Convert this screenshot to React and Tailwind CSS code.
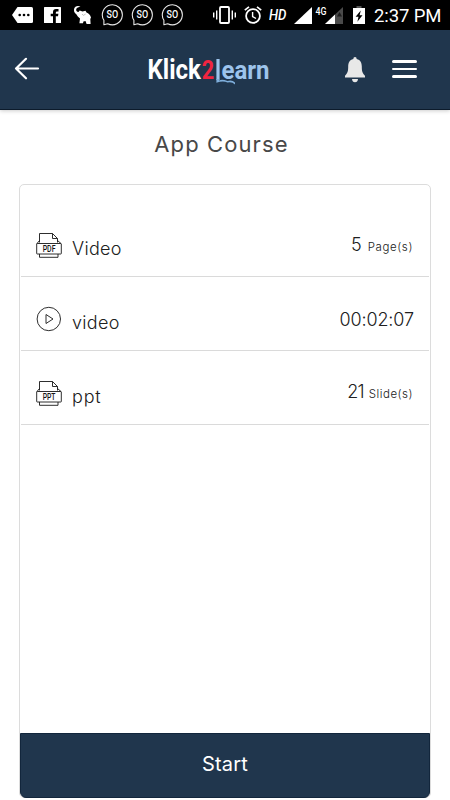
const ink = "#161616";

function ChatBadge() {
  return (
    <svg className="h-[22px] w-[22px] shrink-0" viewBox="0 0 22 22" fill="none">
      <path d="M2.9 20.8 V16.2 A10 10 0 1 1 6.7 19.7 Z" stroke="#e8e8e8" strokeWidth="1.1" strokeLinejoin="round" />
      <text x="5.6" y="14.4" textLength="11.6" lengthAdjust="spacingAndGlyphs" fontFamily="Roboto, sans-serif" fontWeight="500" fontSize="10" fill="#fff">SO</text>
    </svg>
  );
}

function StatusBar() {
  return (
    <div className="flex h-[30px] shrink-0 items-center bg-black">
      <svg className="ml-3 h-4 w-[21px] shrink-0" viewBox="0 0 21 16">
        <path d="M5.5 0 H19.5 Q21 0 21 1.5 V14.5 Q21 16 19.5 16 H5.5 L0 8 Z" fill="#fff" />
        <g fill="#000"><circle cx="7.7" cy="8" r="1.3" /><circle cx="12" cy="8" r="1.3" /><circle cx="16.3" cy="8" r="1.3" /></g>
      </svg>
      <svg className="ml-[11px] h-4 w-[17px] shrink-0" viewBox="0 0 17 16">
        <rect width="17" height="16" rx="0.5" fill="#fff" />
        <path d="M9 16 V9.3 H6.7 V6.7 H9 V5 Q9 2 12 2 H14.5 V4.6 H13 Q11.8 4.6 11.8 5.7 V6.7 H14.4 L14 9.3 H11.8 V16 Z" fill="#000" />
      </svg>
      <svg className="ml-3 h-5 w-[19px] shrink-0" viewBox="0 0 19 20">
        <path d="M7.5 1.8 C5.5 .2 2.5 .8 1.4 3 C.4 5.3 1.1 7.7 3.3 9.2 L4.8 11.5 L7 13.5 L6.4 18.3 H10 L10.4 16.5 L12.500 16 L13.6 18.9 H17.6 L17.3 14 L18 12.5 C17 9.5 15.7 8.2 13.5 7.5 L12.5 5.8 L9.5 6.6 L6.7 5.6 L5.5 7 C3.6 6.9 2.8 5.4 3.3 4 C3.9 2.5 5.7 2.3 7.5 1.8 Z" fill="#fff" />
        <path d="M9 9 L10.3 10.4 L12.7 9" stroke="#999" strokeWidth=".6" fill="none" />
      </svg>
      <div className="ml-[9px] flex gap-2"><ChatBadge /><ChatBadge /><ChatBadge /></div>
      <svg className="ml-[30px] h-[18px] w-[23px] shrink-0" viewBox="0 0 23 18" stroke="#fff" fill="none">
        <rect x="7" y="1" width="9" height="16" rx="1" strokeWidth="1.8" />
        <path d="M3.7 4.5 V13.5 M.7 6.5 V11.5 M19.3 4.5 V13.5 M22.3 6.5 V11.5" strokeWidth="1.4" />
      </svg>
      <svg className="ml-2 h-[18px] w-[18px] shrink-0" viewBox="0 0 18 18" stroke="#fff" fill="none">
        <circle cx="9" cy="10" r="6.9" strokeWidth="1.8" />
        <path d="M.8 4.2 L5 .8 M13 .8 L17.2 4.2" strokeWidth="1.7" />
        <path d="M8.6 6 V10.5 L12 12.5" strokeWidth="1.4" />
      </svg>
      <svg className="ml-[7px] h-[18px] w-[19px] shrink-0" viewBox="0 0 19 18">
        <text x="0" y="14.2" textLength="17.5" lengthAdjust="spacingAndGlyphs" fontFamily="Roboto, sans-serif" fontStyle="italic" fontWeight="500" fontSize="15" fill="#fff">HD</text>
      </svg>
      <svg className="ml-[6px] h-[17px] w-[18px] shrink-0" viewBox="0 0 18 17"><path d="M18 0 V17 H0 Z" fill="#fff" /></svg>
      <svg className="ml-[3px] h-[20px] w-[29px] shrink-0" viewBox="0 0 29 20">
        <path d="M28 2 V19 H10 Z" fill="#4a4a4a" />
        <path d="M20 9.5 V19 H10 Z" fill="#fff" />
        <path d="M24.5 7 L27 11.5 H22 Z" fill="#1c1c1c" />
        <text x="0.500" y="9.5" textLength="11" lengthAdjust="spacingAndGlyphs" fontFamily="Roboto, sans-serif" fontWeight="500" fontSize="11" fill="#fff">4G</text>
      </svg>
      <svg className="ml-[9px] h-[18px] w-3 shrink-0" viewBox="0 0 12 18">
        <path d="M0 2 H12 V18 H0 Z" fill="#fff" />
        <path d="M3.5 0 H8.5 V2 H3.5 Z" fill="#555" />
        <path d="M7.8 4.5 L2.6 10.8 H5.5 L4.4 15.8 L9.5 9.3 H6.6 Z" fill="#000" />
      </svg>
      <span className="mt-px ml-[9px] font-['Roboto',sans-serif] text-[18.5px] leading-[30px] font-normal tracking-[-0.1px] whitespace-nowrap text-white">2:37 PM</span>
    </div>
  );
}

function Logo() {
  return (
    <svg className="h-8 w-[126px]" viewBox="0 0 126 32" fontFamily="Roboto, sans-serif" fontWeight="700">
      <text x="0.5" y="24.5" fontSize="27" textLength="53.5" lengthAdjust="spacingAndGlyphs" fill="#fff">Klick</text>
      <text x="54.8" y="24.500" fontSize="26" textLength="12.4" lengthAdjust="spacingAndGlyphs" fill="#f02440">2</text>
      <path d="M71 5 V26" stroke="#9dc4ec" strokeWidth="3.2" />
      <text x="74.5" y="24.5" fontSize="26" textLength="48" lengthAdjust="spacingAndGlyphs" fill="#9dc4ec">earn</text>
      <path d="M69.4 25 V28.800 Q76 26.500 80.500 28.500 Q85 27.500 88 30.500 V28.500 Q85 25.500 80.500 27 Q75 24.800 72 26.500 V25 Z" fill="#7fafdc" />
    </svg>
  );
}

function Header() {
  return (
    <header className="flex h-20 shrink-0 items-center border-b border-[#0c1b2b] bg-[#20364d] shadow-[0_1px_4px_rgba(0,0,0,0.2)]">
      <svg className="mb-px ml-[14px] h-6 w-[26px]" viewBox="0 0 26 24" fill="none" stroke="#fff" strokeWidth="2.2" strokeLinecap="round" strokeLinejoin="round">
        <path d="M24 11.5 H2 M12 1.8 L2 11.5 L12 21.3" />
      </svg>
      <div className="ml-[107px]"><Logo /></div>
      <svg className="ml-[72px] h-[26px] w-5" viewBox="0 0 20 26" fill="#e8e8e8">
        <path d="M10 0 Q11.7 0 11.7 2 C15.5 2.8 16.8 6 16.8 9.5 C16.8 14 17.3 16 20 18.7 V20.5 H0 V18.7 C2.7 16 3.2 14 3.2 9.5 C3.2 6 4.5 2.8 8.3 2 Q8.3 0 10 0 Z M7 22 H13 Q12.6 25.2 10 25.2 Q7.4 25.2 7 22 Z" />
      </svg>
      <div className="mb-px ml-[27px] flex w-[25px] flex-col gap-[5px]">
        <span className="h-[2.5px] rounded-full bg-white" />
        <span className="h-[2.5px] rounded-full bg-white" />
        <span className="h-[2.5px] rounded-full bg-white" />
      </div>
    </header>
  );
}

function FileIcon({ label }) {
  return (
    <svg className="mb-[2px] h-[26px] w-[26px]" viewBox="0 0 26 26" fill="none" stroke={ink} strokeWidth=".9">
      <path d="M3.5 10.5 V1.5 H16.5 L21.5 6.5 V10.5 M16.5 1.5 V6.5 H21.5 M3.5 8.5 L1 11.5 M21.5 8.5 L25 11.5" />
      <rect x=".7" y="11.5" width="24.6" height="10.5" rx=".5" />
      <path d="M3.5 22 V25.3 H22 V22" />
      <text x="6.7" y="20" textLength="12.8" lengthAdjust="spacingAndGlyphs" stroke="none" fill={ink} fontFamily="Roboto, sans-serif" fontWeight="500" fontSize="8.5">{label}</text>
    </svg>
  );
}

function PlayIcon() {
  return (
    <svg className="mb-[2px] h-[26px] w-[26px]" viewBox="0 0 26 26" fill="none" stroke={ink} strokeWidth=".9">
      <circle cx="12.8" cy="13" r="11.7" />
      <path d="M10 8.5 V17.5 L17 13 Z" strokeLinejoin="round" />
    </svg>
  );
}

function Row({ icon, name, nameClass, valueClass, children }) {
  return (
    <li className="mx-px flex h-[73.7px] items-end border-b border-[#dadada] pr-4 pb-4 pl-[15px]">
      {icon}
      <span className={"ml-[10px] text-[18px] leading-[22px] " + nameClass}>{name}</span>
      <span className={"ml-auto flex items-baseline leading-[22px] " + valueClass}>{children}</span>
    </li>
  );
}

export default function App() {
  return (
    <div className="flex h-[800px] w-[450px] flex-col overflow-hidden bg-white font-['Inter','Open_Sans',sans-serif] font-light text-[#202020]">
      <StatusBar />
      <Header />
      <h1 className="mt-5 pr-[7px] text-center text-[22px] leading-7 font-normal tracking-[1.1px] text-[#484848]">App Course</h1>
      <main className="mx-[19px] mt-[26px] flex h-[614px] flex-col rounded-[5px] border border-[#dcdcdc]">
        <ul className="flex flex-1 flex-col pt-[18.8px]">
          <Row icon={<FileIcon label="PDF" />} name="Video" nameClass="tracking-[0.3px]" valueClass="mb-[2px]">
            <span className="text-[18px]">5</span>
            <span className="ml-[6px] text-[11.5px] tracking-[0.6px]">Page(s)</span>
          </Row>
          <Row icon={<PlayIcon />} name="video" nameClass="tracking-[0.3px]" valueClass="mb-[3px]">
            <span className="-mr-px text-[18px] tracking-[-0.1px]">00:02:07</span>
          </Row>
          <Row icon={<FileIcon label="PPT" />} name="ppt" nameClass="tracking-[0.8px]" valueClass="mb-[3px]">
            <span className="text-[18px] tracking-[-0.8px]">21</span>
            <span className="ml-[5px] text-[11.5px] tracking-[0.5px]">Slide(s)</span>
          </Row>
        </ul>
        <button className="-mb-px h-[65px] shrink-0 rounded-b-[6px] border border-[#12263c] bg-[#20364d] pb-1 text-[20px] font-normal tracking-[0.2px] text-white">Start</button>
      </main>
    </div>
  );
}
